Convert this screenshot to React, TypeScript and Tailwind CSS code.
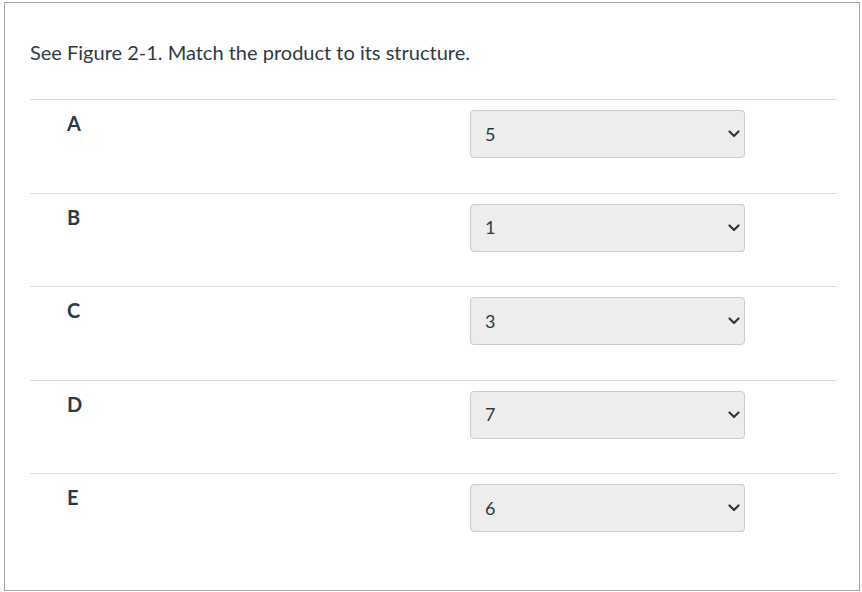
import { useState } from 'react'

const rows = [
  { label: 'A', value: '5' },
  { label: 'B', value: '1' },
  { label: 'C', value: '3' },
  { label: 'D', value: '7' },
  { label: 'E', value: '6' },
]

const options = ['1', '2', '3', '4', '5', '6', '7']

function Chevron() {
  return (
    <svg width="12" height="8" viewBox="0 0 12 8" className="pointer-events-none absolute right-[5px] top-1/2 -translate-y-1/2">
      <path d="M1.5 1.5 L6 6 L10.5 1.5" fill="none" stroke="#2d3b45" strokeWidth="2.2" strokeLinecap="round" strokeLinejoin="round" />
    </svg>
  )
}

function MatchRow({ label, value }: { label: string; value: string }) {
  const [picked, setPicked] = useState(value)
  return (
    <div className="flex h-[93.5px] items-start border-t border-[#dadde0] pt-[10px]">
      <div className="-mt-[2px] w-[440px] pl-[37px] text-[20px] font-bold leading-[1.5]">{label}</div>
      <div className="relative h-[48px] w-[275px]">
        <select
          value={picked}
          onChange={e => setPicked(e.target.value)}
          className="h-full w-full appearance-none rounded-[4px] border border-[#c7cdd1] bg-[#ededed] pl-[14px] font-['Lato','Liberation_Sans',sans-serif] text-[18px] text-[#2d3b45] outline-none"
        >
          {options.map(o => (
            <option key={o} value={o}>{o}</option>
          ))}
        </select>
        <Chevron />
      </div>
    </div>
  )
}

export default function App() {
  return (
    <div className="pl-[4px] pt-[2px] font-['Lato','Liberation_Sans',sans-serif] text-[#2d3b45]">
      <div className="h-[589px] w-[856px] border border-[#a5a5a5] bg-white pl-[25px] pr-[22px] pt-[34px]">
        <p className="text-[20px] leading-[1.5]">See Figure 2-1. Match the product to its structure.</p>
        <div className="mt-[32px]">
          {rows.map(r => (
            <MatchRow key={r.label} label={r.label} value={r.value} />
          ))}
        </div>
      </div>
    </div>
  )
}
